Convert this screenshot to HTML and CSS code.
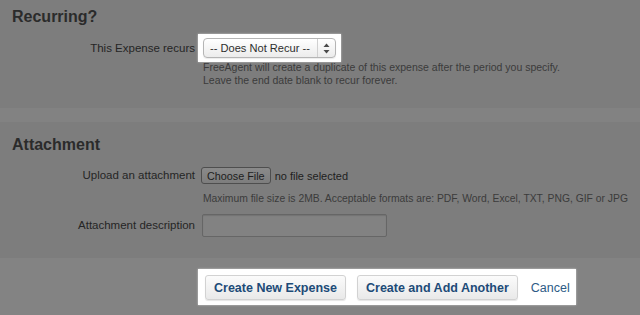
FILE: index.html
```html
<!DOCTYPE html>
<html lang="en">
<head>
    <meta charset="UTF-8">
    <meta name="viewport" content="width=device-width, initial-scale=1.0">
    <title>New Expense</title>
    <link rel="stylesheet" href="styles.css">
</head>

<body>
    <section class="panel panel-recur">
        <h2>Recurring?</h2>
        <div class="row row-select">
            <label class="label">This Expense recurs</label>
            <div class="field">
                <div class="spot spot-select">
                    <div class="select">
                        <span class="select-text">-- Does Not Recur --</span>
                        <span class="select-arrows">
                            <svg width="7" height="11" viewBox="0 0 7 11">
                                <path d="M3.5 0.5 L6.5 4 L0.5 4 Z" fill="#4a4a4a"/>
                                <path d="M0.5 7 L6.5 7 L3.5 10.5 Z" fill="#4a4a4a"/>
                            </svg>
                        </span>
                    </div>
                </div>
                <p class="hint hint-recur">FreeAgent will create a duplicate of this expense after the period you specify.<br>Leave the end date blank to recur forever.</p>
            </div>
        </div>
    </section>

    <div class="gap"></div>

    <section class="panel panel-attach">
        <h2>Attachment</h2>
        <div class="row row-upload">
            <label class="label">Upload an attachment</label>
            <div class="field upload">
                <button class="file-button" type="button">Choose File</button>
                <span class="file-name">no file selected</span>
            </div>
        </div>
        <p class="hint hint-size">Maximum file size is 2MB. Acceptable formats are: PDF, Word, Excel, TXT, PNG, GIF or JPG</p>
        <div class="row row-desc">
            <label class="label">Attachment description</label>
            <div class="field">
                <input class="text-input" type="text">
            </div>
        </div>
    </section>

    <footer class="actions">
        <div class="spot spot-actions">
            <button class="btn" type="button">Create New Expense</button>
            <button class="btn" type="button">Create and Add Another</button>
            <a class="cancel" href="#">Cancel</a>
        </div>
    </footer>
</body>

</html>
```

FILE: styles.css
```css
body {
    margin: 0;
    background-color: #838383;
    font-family: "Liberation Sans", Arial, sans-serif;
    color: #262626;
    width: 640px;
    height: 315px;
    overflow: hidden;
}

.panel {
    background-color: #7d7d7d;
}

.panel-recur {
    padding: 7px 0 21px;
}

.panel-attach {
    padding: 13px 0 21px;
}

.gap {
    height: 14px;
    background-color: #828282;
}

h2 {
    margin: 0 0 0 12px;
    font-size: 16px;
    line-height: 20px;
    font-weight: bold;
    color: #2b2b2b;
}

.row {
    display: grid;
    grid-template-columns: 195px 1fr;
    column-gap: 3px;
}

.label {
    text-align: right;
    font-size: 11.5px;
    color: #252525;
    white-space: nowrap;
}

.row-select {
    margin-top: 7px;
}

.row-select .label {
    line-height: 28px;
}

.spot {
    background-color: #fff;
    box-shadow: 0 0 2px rgba(255, 255, 255, 0.6);
}

.spot-select {
    width: 133px;
    padding: 4px 5px;
}

.select {
    display: flex;
    align-items: center;
    height: 18px;
    border: 1px solid #b5b5b5;
    border-radius: 4px;
    background: linear-gradient(#ffffff, #ececec);
    box-shadow: 0 1px 1px rgba(0, 0, 0, 0.08);
}

.select-text {
    flex: 1;
    padding-left: 6px;
    font-size: 11.1px;
    color: #2e2e2e;
    white-space: nowrap;
}

.select-arrows {
    display: flex;
    align-items: center;
    justify-content: center;
    width: 17px;
    height: 18px;
    border-left: 1px solid #d0d0d0;
}

.hint {
    margin: 0;
    font-size: 10.5px;
    line-height: 13px;
    color: #3b3b3b;
    white-space: nowrap;
}

.hint-recur {
    margin: -1px 0 0 5px;
}

.hint-size {
    margin: 8px 0 0 203px;
    font-size: 10.35px;
}

.row-upload {
    margin-top: 12px;
}

.row-upload .label {
    line-height: 17px;
}

.upload {
    display: flex;
    align-items: center;
    gap: 4px;
    padding-left: 3px;
}

.file-button {
    height: 17px;
    padding: 0 5px;
    margin: 0;
    border: 1px solid #4e4e4e;
    border-radius: 3px;
    background: linear-gradient(#8a8a8a, #7d7d7d);
    font-family: "Liberation Sans", Arial, sans-serif;
    font-size: 10.8px;
    color: #1e1e1e;
}

.file-name {
    font-size: 11px;
    color: #1e1e1e;
}

.row-desc {
    margin-top: 9px;
}

.row-desc .label {
    line-height: 23px;
}

.text-input {
    box-sizing: border-box;
    display: block;
    width: 185px;
    height: 23px;
    margin: 0 0 0 4px;
    border: 1px solid #666;
    border-radius: 2px;
    background-color: #828282;
    box-shadow: inset 0 1px 1px rgba(0, 0, 0, 0.12);
}

.actions {
    padding: 11px 0 0 198px;
}

.spot-actions {
    display: inline-flex;
    align-items: center;
    padding: 6px 6px 5px 7px;
}

.btn {
    height: 25px;
    margin: 0 11px 0 0;
    padding: 0 8px;
    border: 1px solid #d2d2d2;
    border-radius: 3px;
    background: linear-gradient(#fbfbfb, #e9e9e9);
    box-shadow: 0 1px 1px rgba(0, 0, 0, 0.1);
    font-family: "Liberation Sans", Arial, sans-serif;
    font-size: 12.5px;
    font-weight: bold;
    color: #1d4b78;
}

.cancel {
    margin-left: 2px;
    font-size: 12.5px;
    color: #2d5b86;
    text-decoration: none;
}
```
